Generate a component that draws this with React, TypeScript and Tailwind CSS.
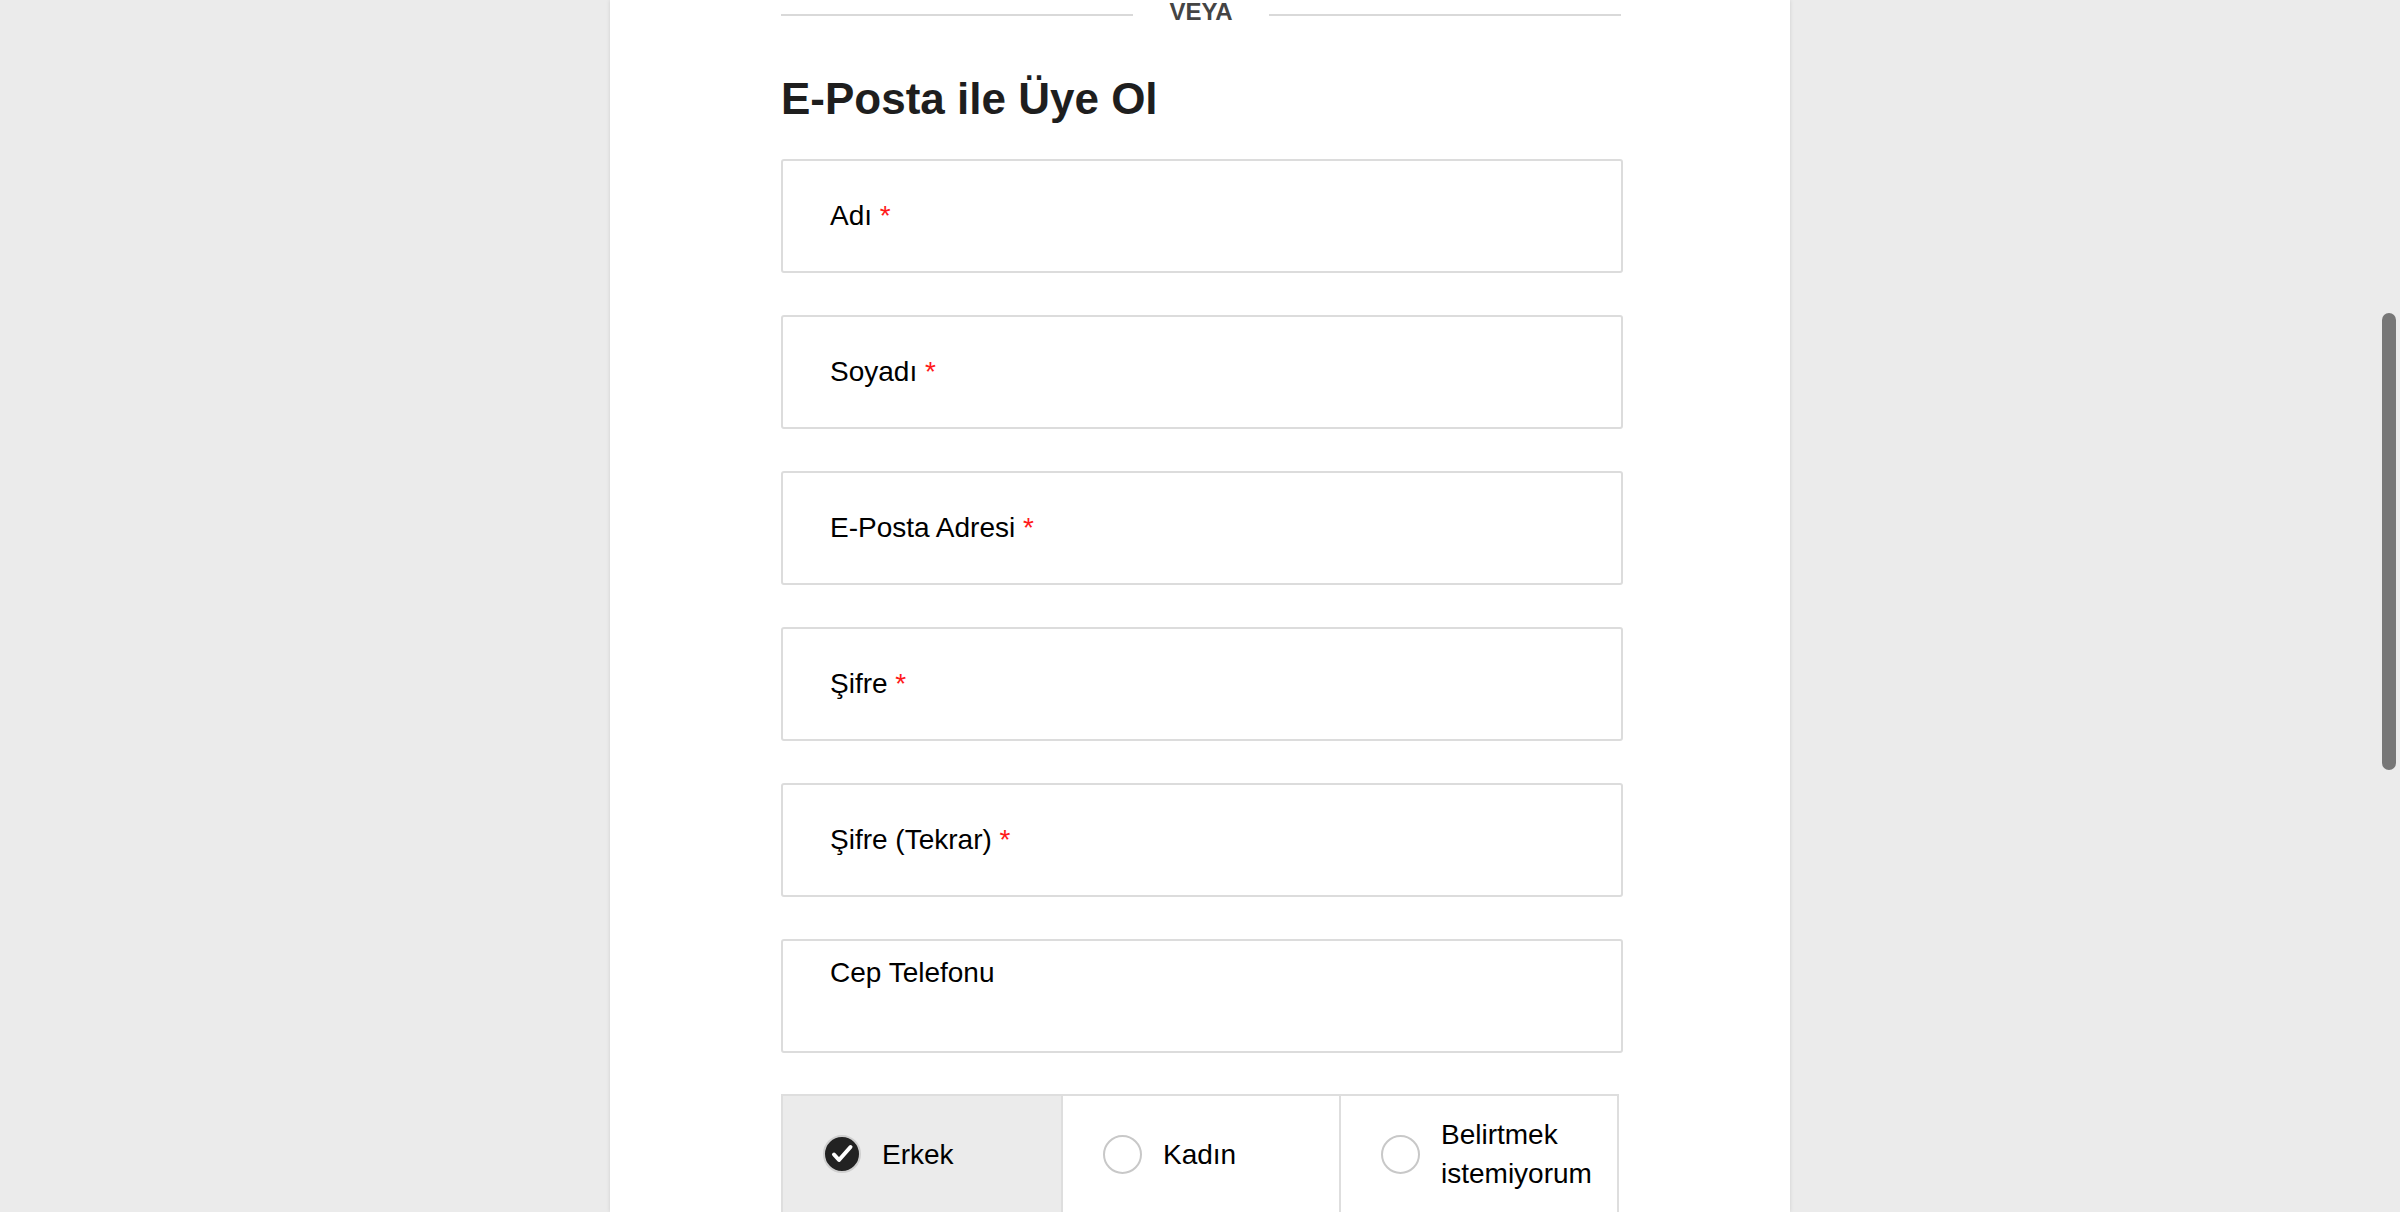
import React from "react";

const fields: { label: string; required: boolean; top?: boolean }[] = [
  { label: "Adı", required: true },
  { label: "Soyadı", required: true },
  { label: "E-Posta Adresi", required: true },
  { label: "Şifre", required: true },
  { label: "Şifre (Tekrar)", required: true },
  { label: "Cep Telefonu", required: false, top: true },
];

function Field({ label, required, top }: { label: string; required: boolean; top?: boolean }) {
  return (
    <div
      className={`flex h-[114px] w-[842px] rounded-[3px] border-2 border-[#dcdcdc] bg-white pl-[47px] ${
        top ? "items-start pt-[18px]" : "items-center"
      }`}
    >
      <span className="text-[28px] leading-[28px] text-black">
        {label}
        {required && <span className="text-[#ff1a1a]"> *</span>}
      </span>
    </div>
  );
}

function Radio({ checked }: { checked: boolean }) {
  if (checked) {
    return (
      <span className="flex h-[38px] w-[38px] shrink-0 items-center justify-center rounded-full border-2 border-[#cfcfcf] bg-[#222222]">
        <svg width="34" height="34" viewBox="0 0 34 34">
          <path d="M9 17.5 L14 23 L25.5 10" fill="none" stroke="#ffffff" strokeWidth="4" strokeLinecap="round" strokeLinejoin="round" />
        </svg>
      </span>
    );
  }
  return <span className="h-[39px] w-[39px] shrink-0 rounded-full border-2 border-[#c8c8c8] bg-white" />;
}

export default function App() {
  return (
    <div
      className="relative h-[1212px] w-full overflow-hidden bg-[#ebebeb]"
      style={{ fontFamily: '"Liberation Sans", Arial, sans-serif' }}
    >
      <div className="mx-auto h-[1212px] w-[1180px] bg-white shadow-[0_0_4px_rgba(0,0,0,0.12)]">
        <div className="ml-[171px] w-[842px]">
          <div className="flex h-6 w-[840px] items-start">
            <div className="mt-[14px] h-[2px] flex-1 bg-[#d9d9d9]" />
            <span className="mx-[36px] text-[24px] font-bold leading-[24px] text-[#444444]">VEYA</span>
            <div className="mt-[14px] h-[2px] flex-1 bg-[#d9d9d9]" />
          </div>
          <h1 className="mt-[53px] text-[44px] font-bold leading-[44px] text-[#1e1e1e]">E-Posta ile Üye Ol</h1>
          <div className="mt-[38px] flex flex-col gap-[42px]">
            {fields.map((f) => (
              <Field key={f.label} {...f} />
            ))}
          </div>
          <div className="mt-[41px] grid h-[120px] w-[838px] grid-cols-[280px_278px_1fr] border-2 border-[#dedede]">
            <div className="flex items-center gap-[21px] border-r-2 border-[#dedede] bg-[#ebebeb] pl-[40px]">
              <Radio checked />
              <span className="text-[28px] leading-[39px] text-black">Erkek</span>
            </div>
            <div className="flex items-center gap-[21px] border-r-2 border-[#dedede] bg-white pl-[40px]">
              <Radio checked={false} />
              <span className="text-[28px] leading-[39px] text-black">Kadın</span>
            </div>
            <div className="flex items-center gap-[21px] bg-white pl-[40px] pr-2">
              <Radio checked={false} />
              <span className="text-[28px] leading-[39px] text-black">Belirtmek istemiyorum</span>
            </div>
          </div>
        </div>
      </div>
      <div className="absolute left-[2382px] top-[313px] h-[457px] w-[14px] rounded-full bg-[#777777]" />
    </div>
  );
}
